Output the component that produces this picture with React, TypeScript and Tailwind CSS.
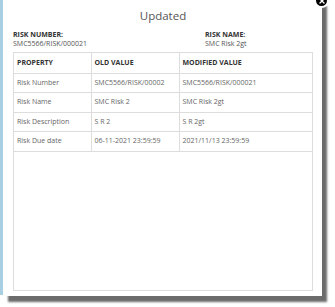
import { X } from 'lucide-react';

const rows = [
  { property: 'Risk Number', oldValue: 'SMC5566/RISK/00002', newValue: 'SMC5566/RISK/000021' },
  { property: 'Risk Name', oldValue: 'SMC Risk 2', newValue: 'SMC Risk 2gt' },
  { property: 'Risk Description', oldValue: 'S R 2', newValue: 'S R 2gt' },
  { property: 'Risk Due date', oldValue: '06-11-2021 23:59:59', newValue: '2021/11/13 23:59:59' },
];

export default function App() {
  return (
    <div className="w-[335px] h-[307px] bg-white overflow-hidden flex items-start font-['Open_Sans',sans-serif]">
      {/* page edge showing behind the modal */}
      <div className="w-[3px] h-[295px] bg-[#a9d0e2]" />

      <div className="relative w-[319px] h-[296px] bg-white shadow-[5px_6px_2px_rgba(70,70,70,0.8)] pl-[10px] pr-[9px] pt-[8px]">
        {/* close button */}
        <button className="absolute -right-[7px] -top-[7px] w-[15px] h-[15px] rounded-full bg-black border-2 border-white flex items-center justify-center">
          <X className="w-[8px] h-[8px] text-white" strokeWidth={4} />
        </button>

        <h2 className="text-center text-[11.5px] leading-[16px] text-[#555]">Updated</h2>

        <div className="flex mt-[6px] text-[7px] leading-[9px]">
          <div className="w-[192px]">
            <div className="font-bold text-[#333]">RISK NUMBER:</div>
            <div className="text-[#555]">SMC5566/RISK/000021</div>
          </div>
          <div>
            <div className="font-bold text-[#333]">RISK NAME:</div>
            <div className="text-[#555]">SMC Risk 2gt</div>
          </div>
        </div>

        <div className="mt-[4px] h-[239px] border border-[#ddd] text-[7px]">
          <table className="w-full border-collapse table-fixed">
            <colgroup>
              <col className="w-[77px]" />
              <col className="w-[88px]" />
              <col />
            </colgroup>
            <thead>
              <tr className="h-[20px]">
                <th className="text-left font-bold text-[#333] pl-[3px] border-r border-b border-[#ddd]">PROPERTY</th>
                <th className="text-left font-bold text-[#333] pl-[3px] border-r border-b border-[#ddd]">OLD VALUE</th>
                <th className="text-left font-bold text-[#333] pl-[3px] border-b border-[#ddd]">MODIFIED VALUE</th>
              </tr>
            </thead>
            <tbody>
              {rows.map((row) => (
                <tr key={row.property} className="h-[19.5px] text-[#666]">
                  <td className="pl-[3px] border-r border-b border-[#ddd]">{row.property}</td>
                  <td className="pl-[3px] border-r border-b border-[#ddd]">{row.oldValue}</td>
                  <td className="pl-[3px] border-b border-[#ddd]">{row.newValue}</td>
                </tr>
              ))}
            </tbody>
          </table>
        </div>
      </div>
    </div>
  );
}
